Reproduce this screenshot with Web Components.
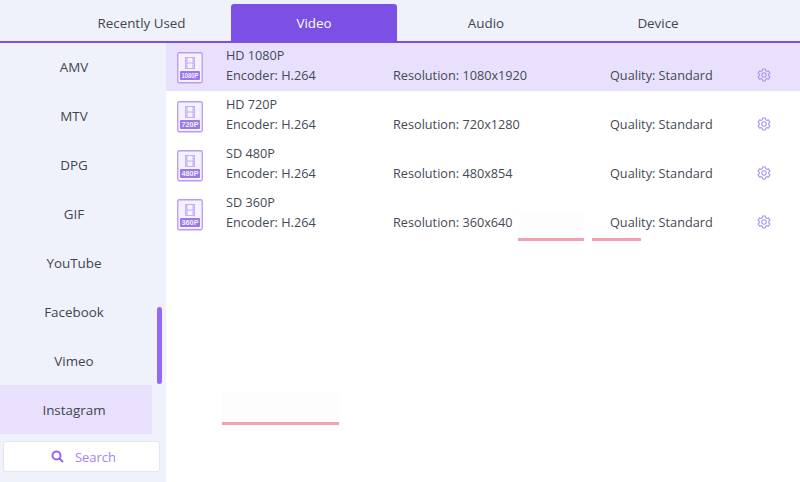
<!DOCTYPE html>
<html><head><meta charset="utf-8"><style>
html,body{margin:0;padding:0;width:800px;height:482px;overflow:hidden;background:#fff}
body{font-family:"Open Sans","Noto Sans",sans-serif}
</style></head><body>
<app-root></app-root>
<script>
const S=(t,h)=>{const c=class extends HTMLElement{constructor(){super();this.attachShadow({mode:'open'}).innerHTML=h(this)}};customElements.define(t,c)};
const gear=`<svg width="14" height="14" viewBox="0 0 14 14" fill="none" stroke="#ac94ec" stroke-width="1.100"><path d="M5.700 1h2.600l.4 1.700 1.200.7 1.700-.5 1.300 2.200L11.700 6.300v1.400l1.200 1.200-1.300 2.200-1.700-.5-1.200.7L8.300 13H5.700l-.4-1.700-1.200-.7-1.700.5L1.100 8.900 2.300 7.700V6.300L1.100 5.100l1.300-2.200 1.700.5 1.200-.7z"/><circle cx="7" cy="7" r="2.200"/></svg>`;
S('res-icon',e=>`<style>:host{display:block;width:26px;height:32px;margin-top:10px}svg{display:block}text{font:700 7.500px "Liberation Sans",sans-serif;fill:#f3eeff}</style>
<svg width="26" height="32" viewBox="0 0 26 32"><rect x=".75" y=".75" width="24.500" height="30" rx="1.500" fill="#f5f1fe" stroke="#b59df2" stroke-width="1.300"/>
<rect x="8" y="5" width="10" height="12" fill="#c4b0f5"/><rect x="10.500" y="6" width="5" height="4.500" fill="#f5f1fe"/><rect x="10.500" y="11.500" width="5" height="4.500" fill="#f5f1fe"/><path d="M9 7.500h.6M9 10h.6M9 12.500h.6M9 15h.6M16.400 7.500h.6M16.400 10h.6M16.400 12.500h.6M16.400 15h.6" stroke="#f5f1fe"/>
<rect x="3" y="19" width="20" height="9" rx="1" fill="#9b78ee"/><text x="13" y="26.300" text-anchor="middle" textLength="17" lengthAdjust="spacingAndGlyphs">${e.getAttribute('label')}</text></svg>`);
S('format-row',e=>`<style>:host{display:grid;grid-template-columns:49px 167px 217px 147px 14px;height:49px;align-items:start;color:#444a55;font-size:12.700px;box-sizing:border-box;padding-left:11px;line-height:18px}
:host([selected]){background:#e9e0fd}
.t{display:flex;flex-direction:column;gap:2px;padding-top:4px}
.c{padding-top:24px}
.g{padding-top:26px;display:flex}
.n{white-space:nowrap}</style>
<res-icon label="${e.getAttribute('label')}"></res-icon>
<div class="t"><span class="n">${e.getAttribute('name')}</span><span class="n">Encoder: H.264</span></div>
<div class="c">Resolution: ${e.getAttribute('res')}</div>
<div class="c">Quality: Standard</div>
<div class="g">${gear}</div>`);
S('side-item',e=>`<style>:host{display:flex;height:49px;width:152px;box-sizing:border-box;padding-right:4px;align-items:center;justify-content:center;color:#3f4550;font-size:13.400px}
:host([selected]){background:#e9e0fd}</style><slot></slot>`);
S('search-box',e=>`<style>:host{display:flex;height:31px;width:157px;box-sizing:border-box;margin:7px 0 0 3px;padding-left:4px;background:#fff;border:1px solid #e3e6f2;border-radius:3px;align-items:center;justify-content:center;gap:11px;color:#a583f2;font-size:13px}svg{display:block}</style>
<svg width="13" height="13" viewBox="0 0 13 13" fill="none" stroke="#9466f0" stroke-width="2"><circle cx="5.500" cy="5.500" r="4"/><path d="M8.500 8.500l3.500 3.500"/></svg><span>Search</span>`);
S('tab-bar',e=>`<style>:host{display:flex;height:43px;box-sizing:border-box;background:#eff2fb;border-bottom:2px solid #7c50e4;color:#3f4550;font-size:13.400px;position:relative;z-index:1}
.t{display:flex;align-items:center;justify-content:center;height:37px;margin-top:4px}
.a{background:#7c50e4;color:#fff;border-radius:3px 3px 0 0}</style>
<div class="t" style="width:231px;padding-left:52px;box-sizing:border-box">Recently Used</div>
<div class="t a" style="width:166px">Video</div>
<div class="t" style="width:178px">Audio</div>
<div class="t" style="width:166px">Device</div>`);
S('side-bar',e=>`<style>:host{display:block;width:166px;height:440px;background:#eff2fb;position:relative}
.b{position:absolute;left:157px;top:265px;width:5px;height:77px;border-radius:3px;background:#9468f5}</style>
<side-item>AMV</side-item><side-item>MTV</side-item><side-item>DPG</side-item><side-item>GIF</side-item><side-item>YouTube</side-item><side-item>Facebook</side-item><side-item>Vimeo</side-item><side-item selected>Instagram</side-item><search-box></search-box><div class="b"></div>`);
S('app-root',e=>`<style>:host{display:block;width:800px;height:482px;position:relative;overflow:hidden}
.m{display:flex;margin-top:-1px}.l{flex:1}
.u{position:absolute;background:#fdfdfe;border-bottom:3px solid #f0a2b0;box-sizing:border-box}</style>
<tab-bar></tab-bar><div class="m"><side-bar></side-bar><div class="l">
<format-row selected label="1080P" name="HD 1080P" res="1080x1920"></format-row>
<format-row label="720P" name="HD 720P" res="720x1280"></format-row>
<format-row label="480P" name="SD 480P" res="480x854"></format-row>
<format-row label="360P" name="SD 360P" res="360x640"></format-row></div></div>
<div class="u" style="left:518px;top:212px;width:66px;height:29px"></div>
<div class="u" style="left:592px;top:237px;width:49px;height:4px;background:none"></div>
<div class="u" style="left:222px;top:393px;width:117px;height:32px"></div>`);
</script>
</body></html>
